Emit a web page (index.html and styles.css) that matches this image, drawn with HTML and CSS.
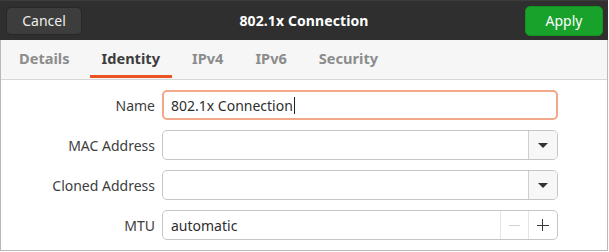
FILE: index.html
```html
<!DOCTYPE html>
<html>
<head>
<meta charset="utf-8">
<link rel="stylesheet" href="styles.css">
</head>
<body>
<div class="window">
  <header class="headerbar">
    <button class="btn cancel">Cancel</button>
    <div class="title">802.1x Connection</div>
    <button class="btn apply">Apply</button>
  </header>
  <nav class="tabs">
    <span class="tab">Details</span>
    <span class="tab active">Identity</span>
    <span class="tab">IPv4</span>
    <span class="tab">IPv6</span>
    <span class="tab">Security</span>
  </nav>
  <main class="form">
    <label class="lbl">Name</label>
    <div class="entry focused"><span class="val">802.1x Connection</span><span class="caret"></span></div>

    <label class="lbl">MAC Address</label>
    <div class="entry combo"><span class="val"></span><span class="dropbtn"><span class="arrow"></span></span></div>

    <label class="lbl">Cloned Address</label>
    <div class="entry combo"><span class="val"></span><span class="dropbtn"><span class="arrow"></span></span></div>

    <label class="lbl">MTU</label>
    <div class="entry spin"><span class="val">automatic</span>
      <span class="spinbtn minus"><span class="hbar"></span></span>
      <span class="spinbtn plus"><span class="hbar"></span><span class="vbar"></span></span>
    </div>
  </main>
</div>
</body>
</html>
```

FILE: styles.css
```css
* { box-sizing: border-box; }
html, body { margin: 0; padding: 0; background: #ffffff; }
body {
  width: 609px;
  height: 252px;
  overflow: hidden;
  font-family: "Noto Sans", "DejaVu Sans", sans-serif;
}
.window {
  width: 608px;
  height: 251px;
  border: 1px solid #b8b8b8;
  border-top: none;
  background: #ffffff;
  display: flex;
  flex-direction: column;
}
.headerbar {
  height: 40px;
  margin: 0 -1px;
  background: #2f2f2f;
  border-top: 1px solid #3c3c3c;
  display: flex;
  align-items: center;
  justify-content: space-between;
  padding: 0 5px 0 6px;
  position: relative;
}
.btn {
  font-family: inherit;
  font-size: 14px;
  height: 28px;
  border-radius: 5px;
  padding: 0;
  cursor: default;
}
.cancel {
  width: 76px;
  background: #3d3d3d;
  border: 1px solid #272727;
  color: #eeeeec;
}
.apply {
  width: 78px;
  height: 30px;
  background: #18a22b;
  border: 1px solid #14921f;
  color: #ffffff;
}
.title {
  position: absolute;
  left: 0;
  right: 0;
  text-align: center;
  font-weight: bold;
  font-size: 14px;
  color: #ffffff;
  pointer-events: none;
  letter-spacing: 0.1px;
}
.tabs {
  height: 40px;
  background: #f6f6f6;
  border-bottom: 1px solid #d6d6d6;
  display: flex;
  align-items: stretch;
  padding-left: 6px;
  gap: 8px;
}
.tab {
  padding: 1px 12px 0;
  display: flex;
  align-items: center;
  font-weight: bold;
  font-size: 14.6px;
  color: #8c8c8c;
  border-bottom: 3px solid transparent;
  margin-bottom: 1px;
}
.tab.active {
  color: #3d3d3d;
  border-bottom-color: #e95420;
}
.form {
  display: grid;
  grid-template-columns: 146px 396px;
  grid-auto-rows: 30px;
  column-gap: 7px;
  row-gap: 10px;
  padding: 10px 0 0 8px;
  align-items: center;
}
.lbl {
  text-align: right;
  font-size: 14px;
  color: #3d3d3d;
  padding-top: 1px;
}
.entry {
  height: 30px;
  border: 1px solid #c5c5c5;
  border-radius: 5px;
  display: flex;
  align-items: center;
  background: #fff;
  overflow: hidden;
}
.val {
  flex: 1;
  padding-left: 8px;
  font-size: 14px;
  color: #2e2e2e;
}
.entry.focused {
  border: 2px solid #f3a78a;
}
.entry.focused .val {
  flex: none;
  padding-left: 7px;
}
.caret {
  width: 1px;
  height: 17px;
  background: #222;
  margin-left: 1px;
}
.dropbtn {
  width: 29px;
  height: 100%;
  background: #f7f7f7;
  border-left: 1px solid #cfcfcf;
  display: flex;
  align-items: center;
  justify-content: center;
}
.arrow {
  width: 0;
  height: 0;
  border-left: 5px solid transparent;
  border-right: 5px solid transparent;
  border-top: 5px solid #333;
  margin-top: 1px;
}
.spinbtn {
  width: 29px;
  height: 100%;
  border-left: 1px solid #e4e4e4;
  position: relative;
  display: flex;
  align-items: center;
  justify-content: center;
}
.spinbtn.minus { width: 28px; }
.hbar {
  width: 11px;
  height: 1px;
  background: #d2d2d2;
}
.plus .hbar { background: #3a3a3a; width: 12px; }
.vbar {
  position: absolute;
  left: 50%;
  top: 50%;
  width: 1px;
  height: 12px;
  margin-left: -1px;
  margin-top: -6px;
  background: #3a3a3a;
}
```
